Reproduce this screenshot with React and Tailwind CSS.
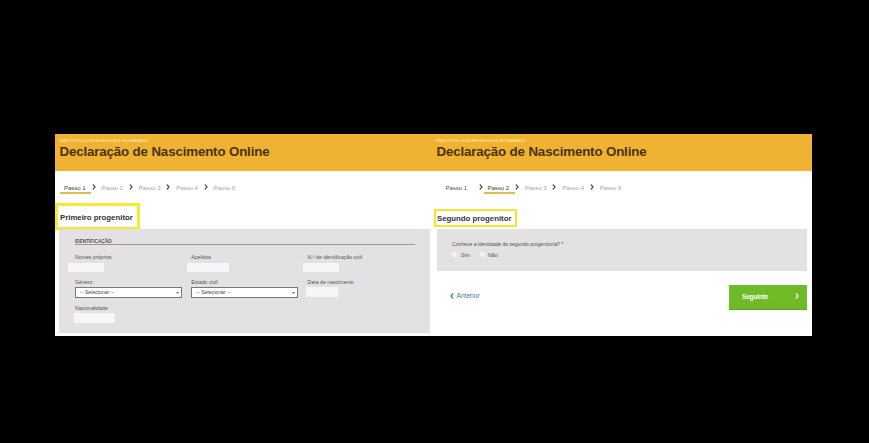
import React from "react";

function Chevron({ className, left = false }) {
  return (
    <svg className={className} viewBox="0 0 4 6" fill="none" stroke="currentColor" strokeWidth="1.2">
      <path d={left ? "M3.2 0.5 L0.9 3 L3.2 5.5" : "M0.8 0.5 L3.1 3 L0.8 5.5"} />
    </svg>
  );
}

function Header({ eyebrow, className }) {
  return (
    <header className={`h-[37px] bg-[#efb233] pt-[4px] ${className}`}>
      <div className="h-[5px] text-[4.4px] leading-[5px] whitespace-nowrap text-[#fff3cd]">{eyebrow}</div>
      <h1 className="pt-px text-[13.3px] leading-[16px] font-bold tracking-[-0.14px] whitespace-nowrap text-[#49330e]">
        Declaração de Nascimento Online
      </h1>
    </header>
  );
}

function Steps({ active, className }) {
  return (
    <nav className={`flex h-[14px] ${className}`}>
      {[1, 2, 3, 4, 5].map((n) => (
        <div key={n} className={`flex ${active === 2 && n === 1 ? "w-[42px]" : "w-[37.4px]"}`}>
          <div
            className={`h-[12px] w-[31px] border-b-2 pl-[4px] text-[6.1px] leading-[11px] tracking-[-0.05px] whitespace-nowrap ${
              n === active ? "border-[#e0bc55] text-[#444]" : n < active ? "border-transparent text-[#555]" : "border-transparent text-[#a5a5a5]"
            }`}
          >
            Passo {n}
          </div>
          {n < 5 && (
            <Chevron className={`mt-[2px] h-[6px] w-[4px] text-[#555] ${active === 2 && n === 1 ? "ml-[6px]" : "ml-[0.5px]"}`} />
          )}
        </div>
      ))}
    </nav>
  );
}

function Field({ label, className = "", children }) {
  return (
    <div className={`w-[116.3px] ${className}`}>
      <div className="h-[8px] text-[5.2px] leading-[8px] whitespace-nowrap text-[#555]">{label}</div>
      {children}
    </div>
  );
}

function Select() {
  return (
    <div className="mt-[1px] flex h-[11px] w-[107px] items-center justify-between border border-[#777] bg-white pr-[2px] pl-[4px] text-[5.2px] leading-[9px] text-[#444]">
      <span>-- Selecionar --</span>
      <svg className="h-[2px] w-[3px]" viewBox="0 0 3 2">
        <path d="M0 0H3L1.5 2Z" fill="#777" />
      </svg>
    </div>
  );
}

export default function App() {
  return (
    <div className="h-[443px] w-[869px] overflow-hidden bg-black pt-[134px] pl-[55px] font-['Liberation_Sans',Arial,sans-serif]">
      <main className="flex h-[202px] w-[757px] overflow-hidden bg-white">
        <section className="w-[378px]">
          <Header eyebrow="INSTITUTO DOS REGISTOS E NOTARIADO" className="pl-[4.5px]" />
          <Steps active={1} className="mt-[10.5px] ml-[5px]" />
          <h2 className="mt-[7.5px] flex h-[27px] w-[85px] items-center border-[3px] border-[#f5ea2d] pt-[2px] pl-[2px] text-[7.8px] font-bold whitespace-nowrap text-[#333]">
            Primeiro progenitor
          </h2>
          <div className="-mt-px ml-[4px] h-[104px] w-[371px] bg-[#e3e1e3] pt-[8px] pl-[16px]">
            <h3 className="h-[8px] w-[340px] border-b border-[#999] text-[4.7px] leading-[9px] font-bold text-[#555]">
              IDENTIFICAÇÃO
            </h3>
            <div className="mt-[8px] flex h-[26px]">
              <Field label="Nomes próprios">
                <div className="mt-[2px] -ml-[7px] h-[9px] w-[36px] bg-[#f7f5f8]" />
              </Field>
              <Field label="Apelidos">
                <div className="mt-[2px] -ml-[4px] h-[9px] w-[42px] bg-[#f7f5f8]" />
              </Field>
              <Field label="N.º de identificação civil">
                <div className="mt-[2px] -ml-[5px] h-[9px] w-[36px] bg-[#f7f5f8]" />
              </Field>
            </div>
            <div className="-mt-px flex h-[26px]">
              <Field label="Género">
                <Select />
              </Field>
              <Field label="Estado civil">
                <Select />
              </Field>
              <Field label="Data de nascimento">
                <div className="mt-[1px] -ml-[2px] h-[10px] w-[32px] bg-[#f7f5f8]" />
              </Field>
            </div>
            <Field label="Nacionalidade">
              <div className="mt-[1px] -ml-[1px] h-[10px] w-[41px] bg-[#f7f5f8]" />
            </Field>
          </div>
        </section>
        <section className="w-[379px]">
          <Header eyebrow="INSTITUTO DOS REGISTOS E NOTARIADO" className="pl-[3.5px]" />
          <Steps active={2} className="mt-[11px] ml-[8.5px]" />
          <h2 className="mt-[13px] ml-px flex h-[18px] w-[83px] items-center border-2 border-[#f5e52d] pt-px pl-px text-[7.8px] font-bold whitespace-nowrap text-[#333]">
            Segundo progenitor
          </h2>
          <div className="mt-[2px] ml-[4px] h-[42px] w-[370px] bg-[#e3e1e2] pt-[11px] pl-[15px] text-[5.2px] text-[#555]">
            <p className="leading-[8px] tracking-[-0.07px] whitespace-nowrap">Conhece a identidade do segundo progenitor/a? *</p>
            <div className="mt-[2.5px] flex h-[8px] items-center leading-[8px]">
              <i className="h-[5px] w-[5px] rounded-full bg-[#f5f3f5]" />
              <span className="ml-[4px] w-[19px]">Sim</span>
              <i className="h-[5px] w-[5px] rounded-full bg-[#f5f3f5]" />
              <span className="ml-[3px]">Não</span>
            </div>
          </div>
          <div className="mt-[14px] flex justify-between pr-[5px] pl-[16.5px]">
            <a className="mt-[6px] flex h-[10px] items-center gap-[3px] text-[6.6px] text-[#3d7f96]">
              <Chevron left className="h-[6px] w-[4px]" />
              Anterior
            </a>
            <button className="flex h-[25px] w-[78px] items-center justify-between border-b border-[#62a629] bg-[#70b927] pr-[8px] pl-[13px] text-[6.4px] font-bold tracking-[-0.1px] text-white">
              Seguinte
              <Chevron className="-mt-[2px] h-[6px] w-[4px]" />
            </button>
          </div>
        </section>
      </main>
    </div>
  );
}
